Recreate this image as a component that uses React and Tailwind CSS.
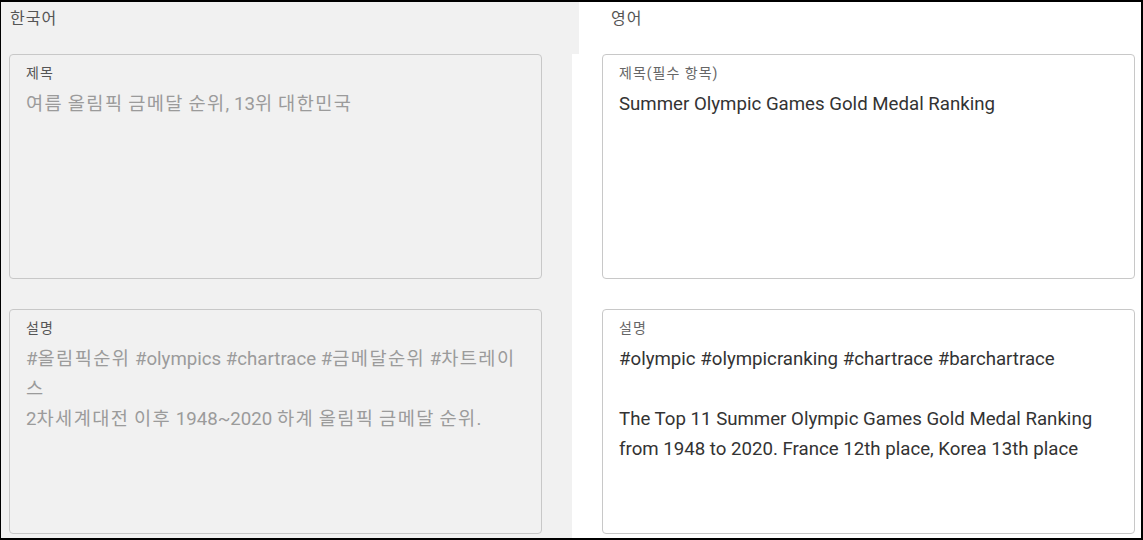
import React from 'react';

const font = { fontFamily: "Roboto, 'Noto Sans CJK KR', sans-serif" };

// hangul in the reference is set a bit wider than Noto CJK, so loosen those runs only
const Ko = ({ text }) =>
    text.split(/([\uac00-\ud7a3]+)/).map((part, i) =>
        /[\uac00-\ud7a3]/.test(part) ? (
            <span key={i} className="tracking-[1.4px]">{part}</span>
        ) : (
            <React.Fragment key={i}>{part}</React.Fragment>
        )
    );

const Field = ({ label, children, muted }) => (
    <div
        className={`h-[225px] w-[533px] rounded-[4px] border border-[#c8c8c8] px-[16px] pt-[8px] ${muted ? 'bg-[#f1f1f1]' : 'bg-white'}`}
    >
        <div className={`text-[14px] tracking-[1px] leading-[20px] ${muted ? 'text-[#555]' : 'text-[#666]'}`}>{label}</div>
        <div className={`mt-[6px] text-[18.67px] leading-[30px] ${muted ? 'text-[#9b9b9b]' : 'text-[#333]'}`}>
            {children}
        </div>
    </div>
);

const App = () => {
    return (
        <div className="w-[1143px] h-[540px] bg-white border-t-2 border-r-2 border-b-2 border-l border-black flex" style={font}>
            {/* Korean column */}
            <div className="w-[578px] flex flex-col">
                <div className="h-[52px] w-[578px] bg-[#f1f1f1] pl-[9px] pt-[7px] text-[16px] tracking-[1px] leading-[20px] text-[#555]">
                    한국어
                </div>
                <div className="flex-1 w-[571px] bg-[#f1f1f1] pl-[8px] flex flex-col gap-[30px]">
                    <Field label="제목" muted>
                        <Ko text="여름 올림픽 금메달 순위, 13위 대한민국" />
                    </Field>
                    <Field label="설명" muted>
                        <Ko text="#올림픽순위 #olympics #chartrace #금메달순위 #차트레이" />
                        <br />
                        <Ko text="스" />
                        <br />
                        <Ko text="2차세계대전 이후 1948~2020 하계 올림픽 금메달 순위." />
                    </Field>
                </div>
            </div>

            {/* English column */}
            <div className="flex-1 flex flex-col">
                <div className="h-[52px] pl-[32px] pt-[7px] text-[16px] tracking-[1px] leading-[20px] text-[#555]">영어</div>
                <div className="pl-[23px] flex flex-col gap-[30px]">
                    <Field label="제목(필수 항목)">Summer Olympic Games Gold Medal Ranking</Field>
                    <Field label="설명">
                        #olympic #olympicranking #chartrace #barchartrace
                        <br />
                        <br />
                        The Top 11 Summer Olympic Games Gold Medal Ranking
                        <br />
                        from 1948 to 2020. France 12th place, Korea 13th place
                    </Field>
                </div>
            </div>
        </div>
    );
};

export default App;
